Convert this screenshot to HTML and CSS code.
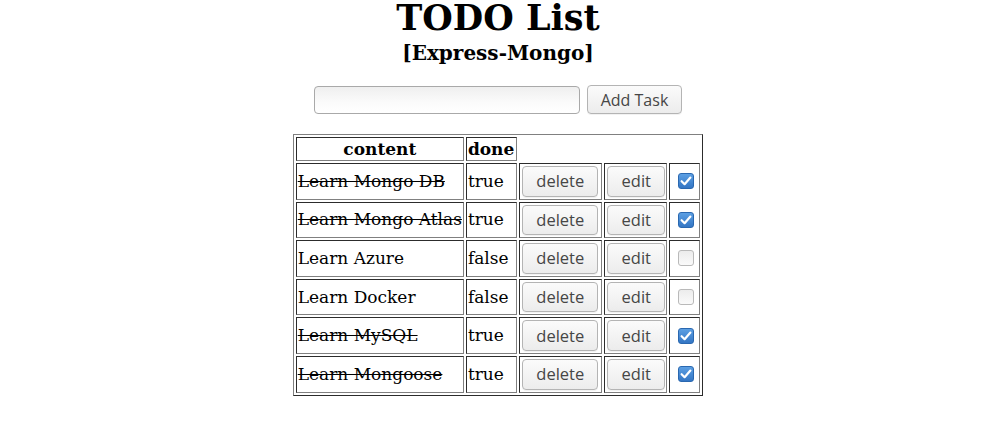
FILE: index.html
```html
<!DOCTYPE html>
<html>
<head>
<meta charset="utf-8">
<title>TODO List</title>
<link rel="stylesheet" href="styles.css">
</head>
<body>
<header class="head">
  <h1 class="title">TODO List</h1>
  <h3 class="subtitle">[Express-Mongo]</h3>
</header>
<form class="add-form">
  <input class="task-input" type="text">
  <button class="btn btn-add" type="button">Add Task</button>
</form>
<table class="todo">
  <tr><th>content</th><th class="done-col">done</th></tr>
  <tr>
    <td class="done-text">Learn Mongo DB</td><td class="done-col">true</td>
    <td><button class="btn btn-delete" type="button">delete</button></td>
    <td><button class="btn btn-edit" type="button">edit</button></td>
    <td><span class="cb checked"><svg viewBox="0 0 16 16" width="16" height="16"><path d="M3.6 8.2 L6.6 11.2 L12.4 4.6" fill="none" stroke="#fff" stroke-width="2.2" stroke-linecap="round" stroke-linejoin="round"/></svg></span></td>
  </tr>
  <tr>
    <td class="done-text">Learn Mongo Atlas</td><td class="done-col">true</td>
    <td><button class="btn btn-delete" type="button">delete</button></td>
    <td><button class="btn btn-edit" type="button">edit</button></td>
    <td><span class="cb checked"><svg viewBox="0 0 16 16" width="16" height="16"><path d="M3.6 8.2 L6.6 11.2 L12.4 4.6" fill="none" stroke="#fff" stroke-width="2.2" stroke-linecap="round" stroke-linejoin="round"/></svg></span></td>
  </tr>
  <tr>
    <td>Learn Azure</td><td class="done-col">false</td>
    <td><button class="btn btn-delete" type="button">delete</button></td>
    <td><button class="btn btn-edit" type="button">edit</button></td>
    <td><span class="cb"></span></td>
  </tr>
  <tr>
    <td>Learn Docker</td><td class="done-col">false</td>
    <td><button class="btn btn-delete" type="button">delete</button></td>
    <td><button class="btn btn-edit" type="button">edit</button></td>
    <td><span class="cb"></span></td>
  </tr>
  <tr>
    <td class="done-text">Learn MySQL</td><td class="done-col">true</td>
    <td><button class="btn btn-delete" type="button">delete</button></td>
    <td><button class="btn btn-edit" type="button">edit</button></td>
    <td><span class="cb checked"><svg viewBox="0 0 16 16" width="16" height="16"><path d="M3.6 8.2 L6.6 11.2 L12.4 4.6" fill="none" stroke="#fff" stroke-width="2.2" stroke-linecap="round" stroke-linejoin="round"/></svg></span></td>
  </tr>
  <tr>
    <td class="done-text">Learn Mongoose</td><td class="done-col">true</td>
    <td><button class="btn btn-delete" type="button">delete</button></td>
    <td><button class="btn btn-edit" type="button">edit</button></td>
    <td><span class="cb checked"><svg viewBox="0 0 16 16" width="16" height="16"><path d="M3.6 8.2 L6.6 11.2 L12.4 4.6" fill="none" stroke="#fff" stroke-width="2.2" stroke-linecap="round" stroke-linejoin="round"/></svg></span></td>
  </tr>
</table>
</body>
</html>
```
FILE: styles.css
```css
html, body {
  background: #fff;
}
body {
  margin: 0;
  padding: 0 17px 0 8px;
  font-family: "DejaVu Serif", serif;
  font-size: 17px;
  color: #000;
}
.head {
  text-align: center;
}
.title {
  margin: 0;
  font-size: 35px;
  line-height: 35px;
  font-weight: bold;
}
.subtitle {
  margin: 6px 0 0;
  font-size: 20px;
  line-height: 24px;
  font-weight: bold;
}
.add-form {
  margin: 21px 0 0;
  display: flex;
  justify-content: center;
  align-items: center;
  gap: 7px;
}
.task-input {
  box-sizing: border-box;
  width: 266px;
  height: 28px;
  margin: 0;
  border: 1px solid #a9a9a9;
  border-radius: 4px;
  background: linear-gradient(#efefef, #fbfbfb 60%, #fff);
  font-family: "Open Sans", sans-serif;
  font-size: 14px;
}
.btn {
  box-sizing: border-box;
  margin: 0;
  padding: 0;
  border: 1px solid #b4b4b4;
  border-radius: 4px;
  background: linear-gradient(#fbfbfb, #ececec);
  color: #464646;
  font-family: "Open Sans", sans-serif;
  font-size: 16.5px;
  line-height: 20px;
  text-align: center;
  box-shadow: 0 1px 0 rgba(0,0,0,0.05);
}
.btn-add {
  width: 95px;
  height: 29px;
  margin-top: -1px;
  font-size: 16px;
}
.todo {
  margin: 20px auto 0;
  border: 1px outset grey;
  border-spacing: 2px;
  border-collapse: separate;
  line-height: 19px;
}
.todo th, .todo td {
  border: 1px inset grey;
  padding: 1px;
  white-space: nowrap;
}
.todo th {
  text-align: center;
  font-weight: bold;
  line-height: 20px;
}
.todo .done-col {
  padding-right: 2px;
}
.done-text {
  text-decoration: line-through;
}
.btn-delete {
  display: block;
  width: 76px;
  height: 30.6px;
  margin: 1px 2px 1px 1px;
}
.btn-edit {
  display: block;
  width: 58px;
  height: 30.6px;
  margin: 1px 0 1px 1px;
}
.cb {
  display: block;
  box-sizing: border-box;
  width: 16px;
  height: 16px;
  margin: 0 4px 0 7px;
  border: 1px solid #b9b9b9;
  border-radius: 3px;
  background: linear-gradient(#ececec, #fafafa);
}
.cb svg {
  display: block;
  margin: -1px;
}
.cb.checked {
  border-color: #2a68b0;
  background: linear-gradient(#5c9fe3, #3476c4);
}
```
